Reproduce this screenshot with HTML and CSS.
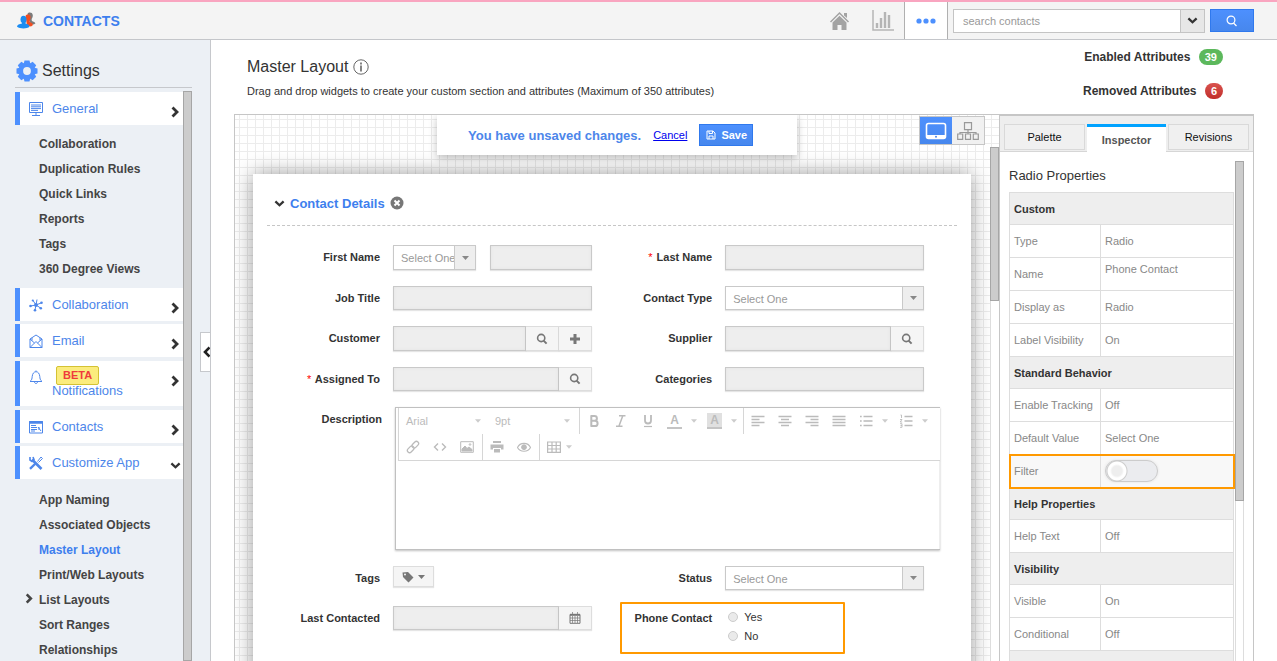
FILE: index.html
```html
<!DOCTYPE html>
<html lang="en">
    <head>
        <meta charset="UTF-8" />
        <meta name="viewport" content="width=device-width, initial-scale=1.0" />
        <title>Contacts - Master Layout</title>
        <link rel="stylesheet" href="styles.css">
    </head>
    <body>
        <!-- SHARED ICONS -->
        <svg class="symbols" aria-hidden="true">
            <symbol id="chev-right" viewBox="0 0 8 12"><path d="M1.5 1.5 6 6 1.5 10.5" fill="none" stroke="currentColor" stroke-width="2.8"/></symbol>
            <symbol id="chev-down" viewBox="0 0 12 8"><path d="M1.3 1.5 6 6 10.7 1.5" fill="none" stroke="currentColor" stroke-width="2.6"/></symbol>
            <symbol id="search" viewBox="0 0 12 12"><circle cx="5.2" cy="5" r="3.6" fill="none" stroke="currentColor" stroke-width="1.6"/><path d="M7.6 7.6 10.6 10.6" stroke="currentColor" stroke-width="2"/></symbol>
            <symbol id="caret" viewBox="0 0 7 4"><path d="M0 0H7L3.5 4Z" fill="currentColor"/></symbol>
        </svg>

        <header class="topbar">
            <a href="#" class="brand">
                <svg width="20" height="18" viewBox="0 0 20 18">
                    <path d="M10.500 2c.8-2 5-2 5.300 1.200.1 1.500-.5 2.800-1.200 3.800l.3 2c1.500.5 3 1 3.500 2.500l-1.800 1-3-1L11 6Z" fill="#7b7b7b"/>
                    <path d="M8.500 4c1-2 4.500-2 5 .5.3 1.500-.3 3-.8 4v1.500c1.500.7 3 1 3.300 3l-2 1.500-4-1Z" fill="#f04e23"/>
                    <ellipse cx="6.500" cy="7.500" rx="3" ry="3.800" fill="#1b8cf2"/>
                    <path d="M5 9h3.500v2.500c2 .5 4 1 4 3.300C10 17 3 17 0 14.800c0-2 2.500-2.800 5-3.300Z" fill="#1b8cf2"/>
                </svg>
                <span>CONTACTS</span>
            </a>
            <nav class="top-links">
                <a href="#" aria-label="Home">
                    <svg width="20" height="20" viewBox="0 0 20 20"><path d="M0.500 11 9.500 2l9 9" fill="none" stroke="#a3a3a3" stroke-width="1.500"/><path d="M14 2h3v5l-3-2.500ZM2.500 11.500 9.500 4.700l7 6.800V19h-5v-5h-4v5h-5Z" fill="#a3a3a3"/></svg>
                </a>
                <a href="#" aria-label="Reports">
                    <svg width="22" height="22" viewBox="0 0 22 22"><path d="M1 0v20h21" fill="none" stroke="#b5b5b5" stroke-width="1.500"/><path d="M5 13v5M9 8v10M13 2v16M17 5v13" stroke="#b5b5b5" stroke-width="2.400"/></svg>
                </a>
                <a href="#" class="current" aria-label="More">
                    <svg width="20" height="6" viewBox="0 0 20 6" fill="#4d90fe"><circle cx="3" cy="3" r="2.600"/><circle cx="10" cy="3" r="2.600"/><circle cx="17" cy="3" r="2.600"/></svg>
                </a>
            </nav>
            <form class="search-form">
                <div class="search-box">
                    <input type="text" aria-label="Search contacts" placeholder="search contacts" />
                    <button type="button" aria-label="Search options"><svg width="11" height="7"><use href="#chev-down"/></svg></button>
                </div>
                <button type="button" class="search-go" aria-label="Search">
                    <svg width="12" height="12" viewBox="0 0 12 12" fill="none" stroke="#fff" stroke-width="1.200"><circle cx="5" cy="5" r="3.900"/><path d="M7.500 8 10.500 11"/></svg>
                </button>
            </form>
        </header>

        <div class="page">
            <aside class="sidebar">
                <h2 class="settings-title">
                    <svg width="22" height="22" viewBox="0 0 22 22"><g fill="#4d90fe"><circle cx="11" cy="11" r="8"/><path d="M8.500 0.500h5l1 4h-7ZM8.500 21.500h5l1-4h-7ZM.5 8.500v5l4 1v-7ZM21.500 8.500v5l-4 1v-7Z"/><path d="M8.500 0.500h5l1 4h-7ZM8.500 21.500h5l1-4h-7ZM.5 8.500v5l4 1v-7ZM21.500 8.500v5l-4 1v-7Z" transform="rotate(45 11 11)"/></g><circle cx="11" cy="11" r="3.900" fill="#ecf0f5"/></svg>
                    <span>Settings</span>
                </h2>
                <div class="side-scroll">
                    <nav class="menu">
                        <a href="#" class="menu-head">
                            <svg class="menu-icon" viewBox="0 0 14 14"><path d="M.5.500h13v10H.500ZM7 10.500v3M3 13.500h8M2 3h10M2 4.800h10M2 6.600h10M2 8.400h7"/></svg>
                            <span>General</span>
                            <svg class="menu-arrow" width="8" height="12"><use href="#chev-right"/></svg>
                        </a>
                        <ul class="submenu">
                            <li><a href="#">Collaboration</a></li>
                            <li><a href="#">Duplication Rules</a></li>
                            <li><a href="#">Quick Links</a></li>
                            <li><a href="#">Reports</a></li>
                            <li><a href="#">Tags</a></li>
                            <li><a href="#">360 Degree Views</a></li>
                        </ul>
                        <a href="#" class="menu-head">
                            <svg class="menu-icon" viewBox="0 0 14 14"><path d="M7 7 4 2.500M7 7l1-5.500M7 7l5-2M7 7l4.500 3M7 7 6 12M7 7 1.500 8"/><g fill="#4d86ea" stroke="none"><circle cx="3.800" cy="2.500" r="1.100"/><circle cx="12.500" cy="4.700" r="1.300"/><circle cx="11.800" cy="10.300" r="1.300"/><circle cx="6" cy="12.300" r="1.300"/><circle cx="1.500" cy="8" r="1.300"/><circle cx="7" cy="7" r="1.900"/></g></svg>
                            <span>Collaboration</span>
                            <svg class="menu-arrow" width="8" height="12"><use href="#chev-right"/></svg>
                        </a>
                        <a href="#" class="menu-head">
                            <svg class="menu-icon" viewBox="0 0 14 14"><path d="M1 5 7 1l6 4v8.500H1ZM1 5l4.500 4M13 5 8.500 9M1 13.500 7 7.500l6 6M3 6.500V3.700M11 6.500V3.700"/></svg>
                            <span>Email</span>
                            <svg class="menu-arrow" width="8" height="12"><use href="#chev-right"/></svg>
                        </a>
                        <a href="#" class="menu-head menu-head-beta">
                            <svg class="menu-icon" viewBox="0 0 14 14"><path d="M7 .5v1M1 11.500c2-1.500 2-3 2.200-5C3.500 3.500 5 1.700 7 1.700s3.500 1.800 3.800 4.800c.2 2 .2 3.500 2.200 5ZM5.500 12c.2 2 2.800 2 3 0"/></svg>
                            <span><b class="beta">BETA</b> Notifications</span>
                            <svg class="menu-arrow" width="8" height="12"><use href="#chev-right"/></svg>
                        </a>
                        <a href="#" class="menu-head">
                            <svg class="menu-icon" viewBox="0 0 14 14"><path d="M.5 1.500h13v11.500H.500Z"/><path d="M0 2.500h14" stroke-width="2.500"/><path d="M2 5.500h5M2 7.500h6M2 9.500h6M2 11h4M9 7l3 4M10 7v3"/></svg>
                            <span>Contacts</span>
                            <svg class="menu-arrow" width="8" height="12"><use href="#chev-right"/></svg>
                        </a>
                        <a href="#" class="menu-head">
                            <svg class="menu-icon" viewBox="0 0 14 14"><path d="M3 3.500 12.500 13" stroke-width="2.600"/><path d="M1 12.800 7 7" stroke-width="2.400"/><path d="M1 1v3l2 1.500 2-2L4 1" stroke-width="1.600"/><path d="M8.500 5.500 12 1l1.500 1.500L9.500 6.500" /></svg>
                            <span>Customize App</span>
                            <svg class="menu-arrow arrow-open" width="11" height="7"><use href="#chev-down"/></svg>
                        </a>
                        <ul class="submenu">
                            <li><a href="#">App Naming</a></li>
                            <li><a href="#">Associated Objects</a></li>
                            <li><a href="#" class="active">Master Layout</a></li>
                            <li><a href="#">Print/Web Layouts</a></li>
                            <li class="has-children"><a href="#"><svg width="8" height="11"><use href="#chev-right"/></svg>List Layouts</a></li>
                            <li><a href="#">Sort Ranges</a></li>
                            <li><a href="#">Relationships</a></li>
                        </ul>
                    </nav>
                    <div class="side-bar"></div>
                </div>
                <button type="button" class="collapse" aria-label="Collapse menu"><svg width="7" height="12" viewBox="0 0 7 12"><path d="M6.500 1.500 2 6l4.500 4.500" fill="none" stroke="#222" stroke-width="2.600"/></svg></button>
            </aside>

            <main class="main">
                <div class="page-head">
                    <div>
                        <h1>Master Layout
                            <svg width="16" height="16" viewBox="0 0 16 16"><circle cx="8" cy="8" r="7.200" fill="none" stroke="#666" stroke-width="1"/><path d="M8 6.500V12.500M8 3.500v2" stroke="#777" stroke-width="1.800"/></svg>
                        </h1>
                        <p>Drag and drop widgets to create your custom section and attributes (Maximum of 350 attributes)</p>
                    </div>
                    <ul class="counts">
                        <li>Enabled Attributes <span class="badge badge-green">39</span></li>
                        <li>Removed Attributes <span class="badge badge-red">6</span></li>
                    </ul>
                </div>

                <div class="workspace">
                    <section class="canvas">
                        <div class="unsaved">
                            <strong>You have unsaved changes.</strong>
                            <a href="#">Cancel</a>
                            <button type="button">
                                <svg width="10" height="10" viewBox="0 0 10 10" fill="none" stroke="#fff"><path d="M1 1h6l2 2v6H1ZM3 1v2.500h3.500V1M3 9V6h4v3"/></svg>
                                Save
                            </button>
                        </div>
                        <div class="view-switch">
                            <button type="button" class="on" aria-label="Layout view">
                                <svg width="22" height="18" viewBox="0 0 22 18"><rect x="1.500" y="1.500" width="19" height="15" rx="2" fill="none" stroke="#fff" stroke-width="1.600"/><path d="M2 13h18v3H2Z" fill="#fff"/><circle cx="11" cy="14.700" r="1" fill="#4d86ea"/></svg>
                            </button>
                            <button type="button" aria-label="Tree view">
                                <svg width="22" height="18" viewBox="0 0 22 18" fill="none" stroke="#999" stroke-width="1.200"><path d="M7.500.700h7v7h-7ZM.7 12h5v5.300h-5ZM8.500 12h5v5.300h-5ZM16.300 12h5v5.300h-5ZM11 8v4M3 12v-1.500h16V12"/></svg>
                            </button>
                        </div>

                        <div class="card">
                            <h3 class="section-title">
                                <svg width="11" height="7"><use href="#chev-down"/></svg>
                                <span>Contact Details</span>
                                <svg width="14" height="14" viewBox="0 0 14 14"><circle cx="7" cy="7" r="6.500" fill="#777"/><path d="M4.500 4.500l5 5M9.500 4.500l-5 5" stroke="#fff" stroke-width="2"/></svg>
                            </h3>
                            <form class="fields">
                                <div class="field">
                                    <label for="first-name">First Name</label>
                                    <div class="control name-control">
                                        <span class="select"><select aria-label="Salutation"><option>Select One</option></select><i><svg width="7" height="6"><use href="#caret"/></svg></i></span>
                                        <input type="text" id="first-name" />
                                    </div>
                                </div>
                                <div class="field">
                                    <label for="last-name"><em>*</em> Last Name</label>
                                    <div class="control"><input type="text" id="last-name" /></div>
                                </div>
                                <div class="field">
                                    <label for="job-title">Job Title</label>
                                    <div class="control"><input type="text" id="job-title" /></div>
                                </div>
                                <div class="field">
                                    <label for="contact-type">Contact Type</label>
                                    <div class="control"><span class="select"><select id="contact-type"><option>Select One</option></select><i><svg width="7" height="6"><use href="#caret"/></svg></i></span></div>
                                </div>
                                <div class="field">
                                    <label for="customer">Customer</label>
                                    <div class="control">
                                        <input type="text" id="customer" />
                                        <button type="button" aria-label="Find customer"><svg width="12" height="12"><use href="#search"/></svg></button>
                                        <button type="button" aria-label="Add customer"><svg width="12" height="12" viewBox="0 0 12 12"><path d="M6 1v10M1 6h10" stroke="#777" stroke-width="3"/></svg></button>
                                    </div>
                                </div>
                                <div class="field">
                                    <label for="supplier">Supplier</label>
                                    <div class="control">
                                        <input type="text" id="supplier" />
                                        <button type="button" aria-label="Find supplier"><svg width="12" height="12"><use href="#search"/></svg></button>
                                    </div>
                                </div>
                                <div class="field">
                                    <label for="assigned"><em>*</em> Assigned To</label>
                                    <div class="control">
                                        <input type="text" id="assigned" />
                                        <button type="button" aria-label="Find assignee"><svg width="12" height="12"><use href="#search"/></svg></button>
                                    </div>
                                </div>
                                <div class="field">
                                    <label for="categories">Categories</label>
                                    <div class="control"><input type="text" id="categories" /></div>
                                </div>

                                <div class="field field-wide">
                                    <label for="description">Description</label>
                                    <div class="editor">
                                        <div class="toolbar">
                                            <div class="tools tools-font">
                                                <button type="button">Arial <svg width="7" height="4"><use href="#caret"/></svg></button>
                                                <button type="button">9pt <svg width="7" height="4"><use href="#caret"/></svg></button>
                                            </div>
                                            <div class="tools">
                                                <button type="button" aria-label="Bold"><svg viewBox="0 0 14 14"><path d="M4 2h3.500a2.300 2.300 0 0 1 0 4.800H4M4 6.800h4a2.500 2.500 0 0 1 0 5.200H4M4.300 1.200v11.600" stroke-width="2"/></svg></button>
                                                <button type="button" aria-label="Italic"><svg viewBox="0 0 14 14"><path d="M5 1.800h6.500M2 12.200h6.500M8.700 2 5 12" stroke-width="1.500"/></svg></button>
                                                <button type="button" aria-label="Underline"><svg viewBox="0 0 14 14"><path d="M4 1v5.500c0 4 6 4 6 0V1" stroke-width="1.800"/><path d="M3 12.500h8" stroke-width="1.200"/></svg></button>
                                                <button type="button" class="swatch" aria-label="Text colour"><b>A</b></button>
                                                <svg class="caret" width="6" height="4"><use href="#caret"/></svg>
                                                <button type="button" class="swatch swatch-fill" aria-label="Background colour"><b>A</b></button>
                                                <svg class="caret" width="6" height="4"><use href="#caret"/></svg>
                                            </div>
                                            <div class="tools tools-last">
                                                <button type="button" aria-label="Align left"><svg viewBox="0 0 14 14"><path d="M.5 2.500h13M.5 5.500h8M.5 8.500h13M.5 11.500h8" stroke-width="1.600"/></svg></button>
                                                <button type="button" aria-label="Align center"><svg viewBox="0 0 14 14"><path d="M.5 2.500h13M3 5.500h8M.5 8.500h13M3 11.500h8" stroke-width="1.600"/></svg></button>
                                                <button type="button" aria-label="Align right"><svg viewBox="0 0 14 14"><path d="M.5 2.500h13M5.500 5.500h8M.5 8.500h13M5.500 11.500h8" stroke-width="1.600"/></svg></button>
                                                <button type="button" aria-label="Justify"><svg viewBox="0 0 14 14"><path d="M.5 2.500h13M.5 5.500h13M.5 8.500h13M.5 11.500h13" stroke-width="1.600"/></svg></button>
                                                <button type="button" aria-label="Bullet list"><svg viewBox="0 0 14 14"><path d="M1 2.500h1.700M4.500 2.500h9M1 7h1.700M4.500 7h9M1 11.500h1.700M4.500 11.500h9" stroke-width="1.500"/></svg></button>
                                                <svg class="caret" width="6" height="4"><use href="#caret"/></svg>
                                                <button type="button" aria-label="Numbered list"><svg viewBox="0 0 14 14"><path d="M5.500 2.500h8M5.500 7h8M5.500 11.500h8" stroke-width="1.500"/><path d="M1.500 1H2.500v3M1 5.500h2L1.200 8H3.200M1 9.700h2v3.600H1M1.500 11.500H3" stroke-width=".9"/></svg></button>
                                                <svg class="caret" width="6" height="4"><use href="#caret"/></svg>
                                            </div>
                                            <div class="tools">
                                                <button type="button" aria-label="Link"><svg viewBox="0 0 14 14"><g transform="rotate(-45 7 7)"><rect x="0" y="4.800" width="7.500" height="4.400" rx="2.200" stroke-width="1.300"/><rect x="6.500" y="4.800" width="7.500" height="4.400" rx="2.200" stroke-width="1.300"/></g></svg></button>
                                                <button type="button" aria-label="Code"><svg viewBox="0 0 14 14"><path d="M5 3.500 1.500 7 5 10.500M9 3.500 12.500 7 9 10.500" stroke-width="1.400"/></svg></button>
                                                <button type="button" aria-label="Image"><svg viewBox="0 0 14 14"><path d="M.7 1.700h12.600v10.600H.700Z" stroke-width="1"/><path d="M2 11V9l3-3 2 2.500 2-1.500 3 2.500V11Z" fill="#bbb"/><circle cx="10" cy="4.500" r=".8"/></svg></button>
                                            </div>
                                            <div class="tools">
                                                <button type="button" aria-label="Print"><svg viewBox="0 0 14 14"><path d="M3 1h8v2H3ZM.500 4.500h13v5H11V8H3v1.500H.500ZM4 9h6v3.500H4Z" fill="#bbb" stroke="none"/></svg></button>
                                                <button type="button" aria-label="Preview"><svg viewBox="0 0 14 14"><path d="M.5 7.500C3 2 11 2 13.500 7.500 11 12.500 3 12.500.5 7.500Z" stroke-width="1.100"/><circle cx="7" cy="7.200" r="2.400" fill="#bbb"/></svg></button>
                                            </div>
                                            <div class="tools tools-last">
                                                <button type="button" aria-label="Table"><svg viewBox="0 0 14 14"><path d="M.6 2h12.800v10.400H.600ZM.6 5.500h12.800M.6 9h12.800M5 2v10.400M9.200 2v10.400" stroke-width="1.200"/></svg></button>
                                                <svg class="caret caret-near" width="6" height="4"><use href="#caret"/></svg>
                                            </div>
                                        </div>
                                        <textarea id="description"></textarea>
                                    </div>
                                </div>

                                <div class="field">
                                    <span class="label">Tags</span>
                                    <button type="button" class="tag-button" aria-label="Add tags">
                                        <svg width="12" height="12" viewBox="0 0 12 12"><path d="M.5 1.500 1 6l5.500 5.500 5-5L6 1ZM3 2.500a1 1 0 1 1 0 2 1 1 0 0 1 0-2Z" fill="#777" fill-rule="evenodd"/></svg>
                                        <svg width="7" height="4"><use href="#caret"/></svg>
                                    </button>
                                </div>
                                <div class="field">
                                    <label for="status">Status</label>
                                    <div class="control"><span class="select"><select id="status"><option>Select One</option></select><i><svg width="7" height="6"><use href="#caret"/></svg></i></span></div>
                                </div>
                                <div class="field">
                                    <label for="last-contacted">Last Contacted</label>
                                    <div class="control">
                                        <input type="text" id="last-contacted" />
                                        <button type="button" aria-label="Pick date"><svg width="12" height="12" viewBox="0 0 12 12" fill="none" stroke="#777"><path d="M1 2.500h10v8.800H1Z"/><path d="M1 2.800h10" stroke-width="2"/><path d="M1 6h10M1 8.500h10M3.500 4v7M6 4v7M8.500 4v7M3.500 0v2M8.500 0v2" stroke-width=".7"/></svg></button>
                                    </div>
                                </div>
                                <div class="field field-selected">
                                    <span class="label">Phone Contact</span>
                                    <div class="radios">
                                        <label><input type="radio" name="phone-contact" /> Yes</label>
                                        <label><input type="radio" name="phone-contact" /> No</label>
                                    </div>
                                </div>
                            </form>
                        </div>
                        <div class="canvas-bar"><div></div></div>
                    </section>

                    <aside class="inspector">
                        <div class="tabs">
                            <button type="button">Palette</button>
                            <button type="button" class="current">Inspector</button>
                            <button type="button">Revisions</button>
                        </div>
                        <div class="props">
                            <h4>Radio Properties</h4>
                            <table>
                                <colgroup><col class="col-name"><col></colgroup>
                                <tr><th colspan="2">Custom</th></tr>
                                <tr><td>Type</td><td>Radio</td></tr>
                                <tr><td>Name</td><td class="top">Phone Contact</td></tr>
                                <tr><td>Display as</td><td>Radio</td></tr>
                                <tr><td>Label Visibility</td><td>On</td></tr>
                                <tr><th colspan="2">Standard Behavior</th></tr>
                                <tr><td>Enable Tracking</td><td>Off</td></tr>
                                <tr><td>Default Value</td><td>Select One</td></tr>
                                <tr class="selected"><td><label for="filter">Filter</label></td><td><input type="checkbox" id="filter" class="toggle" /></td></tr>
                                <tr><th colspan="2">Help Properties</th></tr>
                                <tr><td>Help Text</td><td>Off</td></tr>
                                <tr><th colspan="2">Visibility</th></tr>
                                <tr><td>Visible</td><td>On</td></tr>
                                <tr><td>Conditional</td><td>Off</td></tr>
                                <tr><th colspan="2"></th></tr>
                            </table>
                            <div class="props-bar"><div></div></div>
                        </div>
                    </aside>
                </div>
            </main>
        </div>
    </body>
</html>
```

FILE: styles.css
```css
* {
    box-sizing: border-box;
    margin: 0;
    padding: 0;
}

body {
    display: flex;
    flex-direction: column;
    height: 100vh;
    overflow: hidden;
    font-family: "Liberation Sans", Arial, sans-serif;
    font-size: 11px;
    color: #333;
    background: #fff;
}

button, input, select, textarea {
    font: inherit;
    color: inherit;
}

button {
    cursor: pointer;
}

ul {
    list-style: none;
}

a {
    text-decoration: none;
}

.symbols {
    display: none;
}

/* TOP BAR */
.topbar {
    display: flex;
    flex: none;
    height: 40px;
    padding-right: 23px;
    background: #f4f4f4;
    border-top: 2px solid #f9a5c0;
    border-bottom: 1px solid #c4c6ca;
}

.brand {
    display: flex;
    align-items: center;
    gap: 6px;
    padding-left: 17px;
    font-size: 14px;
    font-weight: bold;
    color: #3e7fee;
}

.top-links {
    display: flex;
    margin-left: auto;
}

.top-links a {
    display: flex;
    align-items: center;
    justify-content: center;
    width: 43px;
}

.top-links .current {
    width: 44px;
    background: #fff;
    border: solid #b0b0b0;
    border-width: 0 1px;
}

.search-form {
    display: flex;
    align-items: center;
    gap: 5px;
    padding-left: 5px;
}

.search-box {
    display: flex;
    width: 252px;
    height: 24px;
    border: 1px solid #c4c4c4;
}

.search-box input {
    flex: 1;
    min-width: 0;
    padding: 0 9px;
    background: #fff;
    border: 0;
}

.search-box input::placeholder {
    color: #999;
}

.search-box button {
    width: 24px;
    color: #333;
    background: #e7e7e7;
    border: 0;
    border-left: 1px solid #c4c4c4;
}

.search-go {
    width: 44px;
    height: 23px;
    background: linear-gradient(#4d90fe, #4787ed);
    border: 1px solid #3079ed;
}

.search-box button svg,
.search-go svg {
    display: block;
    margin: 0 auto;
}

/* SIDEBAR */
.page {
    display: flex;
    flex: 1;
    min-height: 0;
}

.sidebar {
    position: relative;
    display: flex;
    flex-direction: column;
    flex: none;
    width: 211px;
    padding: 18px 18px 0 15px;
    background: #ecf0f5;
    border-right: 1px solid #c6c8cc;
}

.settings-title {
    display: flex;
    align-items: center;
    gap: 4px;
    height: 30px;
    padding: 0 0 4px 1px;
    font-size: 16px;
    font-weight: normal;
    border-bottom: 1px solid #c6c8cc;
}

.side-scroll {
    display: flex;
    flex: 1;
    min-height: 0;
    margin-top: 3px;
    overflow: hidden;
}

.menu {
    flex: 1;
    padding-top: 1px;
}

.side-bar {
    flex: none;
    width: 9px;
    background: #ccc;
    border: 1px solid #a6a6a6;
}

.menu-head {
    display: flex;
    align-items: center;
    gap: 9px;
    height: 33px;
    margin: 3px 0;
    padding: 0 3px 0 9px;
    font-size: 13px;
    color: #4d86ea;
    background: #fff;
    border-left: 5px solid #4d90fe;
}

.menu-head:first-child,
.submenu + .menu-head {
    margin-top: 0;
}

.menu-icon {
    flex: none;
    width: 14px;
    height: 14px;
    fill: none;
    stroke: #4d86ea;
}

.menu-arrow {
    margin: 6px 1px 0 auto;
    color: #333;
}

.arrow-open {
    margin-right: -1px;
}

.menu-head-beta {
    height: 45px;
    margin: 4px 0;
}

.menu-head-beta span {
    display: flex;
    flex-direction: column;
    align-items: flex-start;
    margin-bottom: 5px;
    line-height: 11px;
}

.menu-head-beta .menu-icon {
    margin-bottom: 13px;
}

.menu-head-beta .menu-arrow {
    margin-top: 0;
    margin-bottom: 6px;
}

.beta {
    margin-left: 4px;
    padding: 0 6px;
    font-size: 11px;
    line-height: 17px;
    color: #ef3c3c;
    background: #fbec7d;
    border: 1px solid #d4c233;
    border-radius: 2px;
}

.submenu {
    margin-top: -3px;
    padding: 7px 0 6px 24px;
    font-size: 12px;
}

.submenu:last-child {
    padding-top: 9px;
}

.submenu li {
    line-height: 25px;
}

.submenu a {
    font-weight: bold;
    color: #444;
}

.submenu .active {
    color: #3e7fee;
}

.submenu .has-children {
    margin-left: -14px;
}

.has-children svg {
    margin-right: 6px;
}

.collapse {
    position: absolute;
    top: 292px;
    right: 0;
    width: 10px;
    height: 40px;
    background: #fff;
    border: 1px solid #c6c8cc;
    border-right: 0;
}

.collapse svg {
    display: block;
    margin-left: 2px;
}

/* PAGE HEADING */
.main {
    display: flex;
    flex-direction: column;
    flex: 1;
    min-width: 0;
}

.page-head {
    display: flex;
    justify-content: space-between;
    flex: none;
    height: 74px;
    padding: 8px 54px 0 36px;
}

h1 {
    display: flex;
    align-items: center;
    gap: 5px;
    margin-top: 9px;
    font-size: 16px;
    font-weight: normal;
    line-height: 20px;
}

.page-head p {
    margin-top: 8px;
    line-height: 13px;
}

.counts {
    display: flex;
    flex-direction: column;
    align-items: flex-end;
    gap: 16px;
}

.counts li {
    font-size: 12px;
    font-weight: bold;
    line-height: 18px;
}

.badge {
    display: inline-block;
    margin-left: 5px;
    padding: 0 6px;
    font-size: 11px;
    line-height: 16px;
    color: #fff;
    border-radius: 8px;
}

.badge-green {
    background: #5cb85c;
}

.badge-red {
    background: linear-gradient(#d9534f, #c12e2a);
}

/* CANVAS */
.workspace {
    display: flex;
    flex: 1;
    min-height: 0;
    margin: 0 23px;
    border-top: 1px solid #c6c6c6;
}

.canvas {
    position: relative;
    flex: 1;
    min-width: 0;
    padding: 59px 28px 0 18px;
    overflow: hidden;
    background:
        linear-gradient(#ececec 1px, transparent 1px) 0 4px / 8px 8px,
        linear-gradient(90deg, #ececec 1px, transparent 1px) 4px 0 / 8px 8px;
    border-left: 1px solid #c6c6c6;
}

.unsaved {
    position: absolute;
    top: 0;
    left: 202px;
    z-index: 2;
    display: flex;
    align-items: center;
    gap: 12px;
    width: 360px;
    height: 40px;
    padding-left: 31px;
    background: #fff;
    box-shadow: 0 3px 8px rgba(0, 0, 0, 0.25);
}

.unsaved strong {
    font-size: 13px;
    color: #4d86ea;
}

.unsaved a {
    color: #0000ee;
    text-decoration: underline;
}

.unsaved button {
    display: flex;
    align-items: center;
    gap: 5px;
    height: 22px;
    padding: 0 5px 0 6px;
    font-weight: bold;
    color: #fff;
    background: linear-gradient(#4d90fe, #4787ed);
    border: 1px solid #3079ed;
}

.view-switch {
    position: absolute;
    top: 1px;
    right: 14px;
    z-index: 2;
    display: flex;
    border: 1px solid #c6c6c6;
}

.view-switch button {
    display: flex;
    align-items: center;
    justify-content: center;
    width: 32px;
    height: 27px;
    background: #f1f1f1;
    border: 0;
}

.view-switch .on {
    background: linear-gradient(#4d90fe, #4787ed);
}

.card {
    height: 600px;
    padding: 0 14px;
    background: #fff;
    box-shadow: 0 0 20px rgba(0, 0, 0, 0.4);
}

.section-title {
    display: flex;
    align-items: center;
    gap: 5px;
    height: 52px;
    padding: 7px 0 0 7px;
    font-size: 13px;
    color: #3e7fee;
    border-bottom: 1px dashed #c6c6c6;
}

.section-title svg {
    color: #333;
}

.canvas-bar {
    position: absolute;
    top: 32px;
    right: 0;
    bottom: 0;
    width: 9px;
    background: #fff;
    border-left: 1px solid #ddd;
}

.canvas-bar div {
    height: 154px;
    margin-left: -1px;
    background: #ccc;
    border: 1px solid #a6a6a6;
}

/* FORM FIELDS */
.fields {
    display: grid;
    grid-template-columns: 48% 1fr;
    grid-template-rows: 25px 24px 25px 24px 143px 24px 24px;
    gap: 16px 1px;
    padding-top: 19px;
}

.field {
    position: relative;
    display: flex;
    gap: 13px;
}

.field > label,
.field > .label {
    flex: none;
    width: 113px;
    padding-top: 5px;
    font-weight: bold;
    line-height: 14px;
    text-align: right;
}

.field em {
    margin-right: 1px;
    font-style: normal;
    font-weight: normal;
    color: #f00;
}

.control {
    display: flex;
    width: 199px;
}

.name-control {
    gap: 14px;
}

.name-control .select {
    flex: none;
    width: 83px;
}

.control input {
    flex: 1;
    min-width: 0;
    background: #eee;
    border: 1px solid #c9c9c9;
    box-shadow: 0 1px 1px rgba(0, 0, 0, 0.1), inset 0 0 3px #e2e2e2;
}

.control button {
    display: flex;
    align-items: center;
    justify-content: center;
    width: 33px;
    color: #777;
    background: #f5f5f5;
    border: 1px solid #ddd;
    border-left: 0;
    box-shadow: 0 1px 1px rgba(0, 0, 0, 0.1);
}

.select {
    display: flex;
    flex: 1;
    border: 1px solid #c9c9c9;
    box-shadow: 0 1px 1px rgba(0, 0, 0, 0.1);
}

.select select {
    flex: 1;
    min-width: 0;
    padding: 1px 0 0 7px;
    color: #999;
    background: #fff;
    border: 0;
    appearance: none;
}

.select i {
    display: flex;
    align-items: center;
    justify-content: center;
    width: 21px;
    color: #888;
    background: #eee;
    border-left: 1px solid #c9c9c9;
}

.field-wide {
    grid-column: 1 / 3;
}

.field-wide > label {
    width: 115px;
}

.editor {
    display: flex;
    flex-direction: column;
    flex: 1;
    margin-right: 17px;
    border: solid #c0c0c0;
    border-width: 1px 0 1px 1px;
    box-shadow: 0 1px 2px rgba(0, 0, 0, 0.25);
}

.toolbar {
    display: flex;
    flex-wrap: wrap;
    flex: none;
    margin-left: 2px;
    border-left: 1px solid #d6d6d6;
    border-bottom: 1px solid #d6d6d6;
    box-shadow: 0 1px 1px rgba(0, 0, 0, 0.06);
    color: #bbb;
}

.tools {
    display: flex;
    align-items: center;
    height: 26px;
    padding-right: 2px;
    border-right: 1px solid #d6d6d6;
}

.tools-last {
    padding-right: 0;
    border-right: 0;
}

.tools-last:nth-child(3) {
    flex: 1;
}

.tools button {
    display: flex;
    align-items: center;
    justify-content: center;
    width: 27px;
    background: none;
    border: 0;
}

.tools button svg {
    width: 14px;
    height: 14px;
    fill: none;
    stroke: currentColor;
}

.tools-font button {
    justify-content: space-between;
    width: 89px;
    padding: 0 7px;
}

.tools .caret,
.tools-font button svg {
    width: 6px;
    height: 4px;
    stroke: none;
    color: #ccc;
}

.tools .caret {
    margin: 0 4px 0 3px;
}

.tools .caret-near {
    margin-left: -1px;
}

.swatch b {
    width: 15px;
    font-size: 12px;
    line-height: 14px;
    border-bottom: 2px solid #c4c4c4;
}

.swatch-fill b {
    background: #e0e0e0;
}

.editor textarea {
    flex: 1;
    width: 100%;
    border: 0;
    border-right: 1px solid #eee;
    outline: none;
    resize: none;
}

.tag-button {
    display: flex;
    align-items: center;
    justify-content: center;
    gap: 4px;
    width: 41px;
    height: 21px;
    color: #777;
    background: #f5f5f5;
    border: 1px solid #ddd;
    box-shadow: 0 1px 1px rgba(0, 0, 0, 0.1);
}

.field-selected::after {
    content: "";
    position: absolute;
    top: -4px;
    left: 21px;
    box-sizing: border-box;
    width: 225px;
    height: 52px;
    border: 2px solid #f90;
    border-radius: 1px;
    pointer-events: none;
}

.radios {
    padding: 1px 0 0 3px;
}

.radios label {
    display: flex;
    align-items: center;
    gap: 6px;
    height: 19px;
}

.radios input {
    width: 10px;
    height: 10px;
    background: #eaeaea;
    border: 1px solid #ccc;
    border-radius: 50%;
    appearance: none;
}

/* INSPECTOR */
.inspector {
    flex: none;
    width: 255px;
    overflow: hidden;
    border: solid #c6c6c6;
    border-width: 1px 1px 0;
}

.tabs {
    display: flex;
    gap: 2px;
    height: 36px;
    padding: 8px 4px 0;
    background: #eee;
    border-bottom: 1px solid #d6d6d6;
}

.tabs button {
    flex: 1;
    height: 26px;
    color: #111;
    background: #f0f0f0;
    border: 1px solid #d9d9d9;
}

.tabs .current {
    height: 28px;
    font-weight: bold;
    color: #555;
    background: #fff;
    border: 0;
    border-top: 3px solid #00a2ff;
}

.props {
    position: relative;
    height: 600px;
    padding: 0 19px 0 9px;
}

h4 {
    padding: 16px 0 8px;
    font-size: 13px;
    font-weight: normal;
    line-height: 16px;
}

table {
    width: 100%;
    border-collapse: collapse;
    table-layout: fixed;
}

th, td {
    padding: 0 4px;
    text-align: left;
    border: 1px solid #ddd;
}

th {
    height: 32px;
    background: #eee;
}

td {
    height: 33px;
    color: #888;
}

.col-name {
    width: 91px;
}

td.top {
    padding-top: 5px;
    vertical-align: top;
}

.selected {
    background: #f8f8f8;
    outline: 2px solid #f90;
    outline-offset: -1px;
}

.toggle {
    display: block;
    width: 53px;
    height: 22px;
    background:
        radial-gradient(circle at 11px 10px, #eee 5px, #fff 7px, #fff 9px, #ccc 10px, transparent 11px),
        #ebecef;
    border: 1px solid #ccc;
    border-radius: 11px;
    box-shadow: 0 0 2px 1px #eee;
    appearance: none;
}

.props-bar {
    position: absolute;
    top: 9px;
    right: 9px;
    bottom: 0;
    width: 9px;
    border: solid #ddd;
    border-width: 0 1px;
}

.props-bar div {
    height: 340px;
    margin: 0 -1px;
    background: #ccc;
    border: 1px solid #a6a6a6;
}
```
